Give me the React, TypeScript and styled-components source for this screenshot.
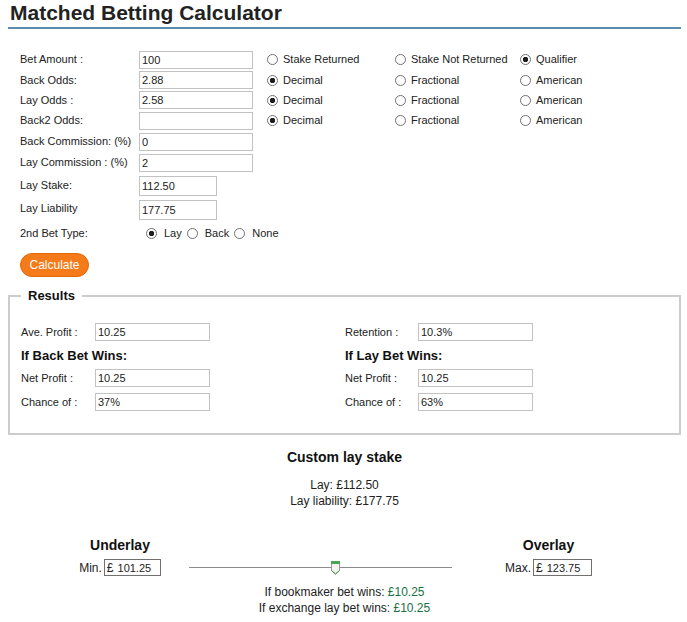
import React from "react";
import styled, { createGlobalStyle } from "styled-components";

const GlobalStyle = createGlobalStyle`
  body {
    margin: 0;
    background: #ffffff;
    font-family: "Liberation Sans", Arial, sans-serif;
    color: #222222;
  }
`;

const Page = styled.div`
  width: 673px;
  margin: 0 8px;
`;

const Title = styled.h1`
  margin: 0;
  padding: 0 0 2px 2px;
  font-size: 21px;
  line-height: 25px;
  font-weight: bold;
  color: #222222;
  border-bottom: 2px solid #5d89ab;
`;

const Form = styled.div`
  margin-top: 20px;
  padding-left: 12px;
`;

const Row = styled.div<{ $h: number }>`
  display: grid;
  grid-template-columns: 119px 128px 128px 125px auto;
  align-items: center;
  height: ${(p) => p.$h}px;
`;

const Label = styled.span<{ $top?: number }>`
  font-size: 11px;
  line-height: 13px;
  align-self: ${(p) => (p.$top !== undefined ? "start" : "center")};
  padding-top: ${(p) => p.$top ?? 0}px;
`;

const TextBox = styled.input<{ $w?: number; $h?: number }>`
  box-sizing: border-box;
  width: ${(p) => p.$w ?? 114}px;
  height: ${(p) => p.$h ?? 18}px;
  margin: 0;
  border: 1px solid #c2c2c2;
  padding: 0 2px;
  font: 11px "Liberation Sans", Arial, sans-serif;
  color: #222222;
  background: #ffffff;
  outline: none;
`;

const Choice = styled.label<{ $gap?: number }>`
  display: flex;
  align-items: center;
  gap: ${(p) => p.$gap ?? 5}px;
  font-size: 11px;
  line-height: 13px;
  white-space: nowrap;
`;

const Radio = styled.input.attrs({ type: "radio" })`
  appearance: none;
  margin: 0;
  width: 11px;
  height: 11px;
  border: 1px solid #707070;
  border-radius: 50%;
  background: #ffffff;
  flex: none;

  &:checked {
    background: radial-gradient(circle, #1e1e1e 0 2.4px, #ffffff 3px);
  }
`;

const BetTypes = styled.div`
  grid-column: 2 / span 4;
  display: flex;
  align-items: center;
  gap: 5px;
  padding-left: 7px;
`;

const CalcButton = styled.button`
  display: block;
  margin-top: 9px;
  width: 69px;
  height: 24px;
  padding: 0;
  border: 1px solid #e2690b;
  border-radius: 12px;
  background: #f47a1a;
  color: #ffffff;
  font: 12px "Liberation Sans", Arial, sans-serif;
`;

const Results = styled.fieldset`
  margin: 11px 0 0;
  padding: 16px 11px 19px;
  border: 2px solid #cccccc;
  min-width: 0;
`;

const Legend = styled.legend`
  padding: 0 7px;
  font-size: 13px;
  font-weight: bold;
  line-height: 16px;
  color: #111111;
`;

const ResultGrid = styled.div`
  display: grid;
  grid-template-columns: 324px 1fr;
  grid-template-rows: 24px 22px 24px 24px;
`;

const ResultRow = styled.div<{ $label: number }>`
  display: grid;
  grid-template-columns: ${(p) => p.$label}px 115px;
  align-items: center;
`;

const ResultHeading = styled.div`
  display: flex;
  align-items: center;
  font-size: 13px;
  font-weight: bold;
  color: #111111;
`;

const Custom = styled.div`
  margin-top: 14px;
  text-align: center;
  font-size: 12px;
  line-height: 16px;
`;

const Heading = styled.div`
  font-size: 14px;
  font-weight: bold;
  line-height: 17px;
  color: #111111;
`;

const Lines = styled.div<{ $mt: number }>`
  margin-top: ${(p) => p.$mt}px;
`;

const Money = styled.span`
  color: #20703f;
`;

const Adjust = styled.div`
  display: grid;
  grid-template-columns: 116px 263px 154px;
  column-gap: 11px;
  grid-template-rows: 17px 17px;
  row-gap: 5px;
  margin-top: 28px;
  padding-left: 54px;
  align-items: center;
`;

const SideHead = styled.div<{ $col: number; $indent?: number }>`
  grid-column: ${(p) => p.$col};
  grid-row: 1;
  padding-left: ${(p) => p.$indent ?? 0}px;
  text-align: center;
  font-size: 14px;
  font-weight: bold;
  line-height: 17px;
  color: #111111;
`;

const SideInput = styled.div<{ $col: number; $indent?: number }>`
  grid-column: ${(p) => p.$col};
  grid-row: 2;
  padding-left: ${(p) => p.$indent ?? 0}px;
  display: flex;
  justify-content: center;
  align-items: center;
  gap: 2px;
  font-size: 12px;
`;

const MoneyBox = styled.span<{ $w: number }>`
  box-sizing: border-box;
  display: inline-flex;
  align-items: center;
  gap: 4px;
  width: ${(p) => p.$w}px;
  height: 17px;
  padding-left: 2px;
  border: 1px solid #707070;
  font-size: 12px;
  & > b {
    font-weight: normal;
    font-size: 11px;
  }
`;

const Track = styled.div`
  grid-column: 2;
  grid-row: 2;
  position: relative;
  height: 17px;
  &::before {
    content: "";
    position: absolute;
    left: 0;
    right: 0;
    top: 8px;
    height: 1px;
    background: #8c8c8c;
  }
`;

const Thumb = styled.svg`
  position: absolute;
  left: 141px;
  top: 1px;
`;

const Outcome = styled.div`
  margin-top: 8px;
  text-align: center;
  font-size: 12px;
  line-height: 16px;
`;

const oddsRows = [
  { label: "Back Odds:", value: "2.88", name: "back" },
  { label: "Lay Odds :", value: "2.58", name: "lay" },
  { label: "Back2 Odds:", value: "", name: "back2" },
];

function App() {
  return (
    <Page>
      <GlobalStyle />
      <Title>Matched Betting Calculator</Title>
      <Form>
        <Row $h={21}>
          <Label>Bet Amount :</Label>
          <TextBox defaultValue="100" />
          <Choice>
            <Radio name="bettype" />
            Stake Returned
          </Choice>
          <Choice>
            <Radio name="bettype" />
            Stake Not Returned
          </Choice>
          <Choice>
            <Radio name="bettype" defaultChecked />
            Qualifier
          </Choice>
        </Row>
        {oddsRows.map((r, i) => (
          <Row key={r.name} $h={i === 2 ? 21 : 20}>
            <Label>{r.label}</Label>
            <TextBox defaultValue={r.value} />
            <Choice>
              <Radio name={r.name} defaultChecked />
              Decimal
            </Choice>
            <Choice>
              <Radio name={r.name} />
              Fractional
            </Choice>
            <Choice>
              <Radio name={r.name} />
              American
            </Choice>
          </Row>
        ))}
        <Row $h={21}>
          <Label>Back Commission: (%)</Label>
          <TextBox defaultValue="0" />
        </Row>
        <Row $h={21}>
          <Label>Lay Commission : (%)</Label>
          <TextBox defaultValue="2" />
        </Row>
        <Row $h={25}>
          <Label>Lay Stake:</Label>
          <TextBox $w={78} $h={20} defaultValue="112.50" />
        </Row>
        <Row $h={24}>
          <Label $top={4}>Lay Liability</Label>
          <TextBox $w={78} $h={20} defaultValue="177.75" />
        </Row>
        <Row $h={22}>
          <Label>2nd Bet Type:</Label>
          <BetTypes>
            <Choice $gap={7}>
              <Radio name="second" defaultChecked />
              Lay
            </Choice>
            <Choice $gap={7}>
              <Radio name="second" />
              Back
            </Choice>
            <Choice $gap={7}>
              <Radio name="second" />
              None
            </Choice>
          </BetTypes>
        </Row>
        <CalcButton>Calculate</CalcButton>
      </Form>

      <Results>
        <Legend>Results</Legend>
        <ResultGrid>
          <ResultRow $label={74}>
            <Label>Ave. Profit :</Label>
            <TextBox $w={115} defaultValue="10.25" />
          </ResultRow>
          <ResultRow $label={73}>
            <Label>Retention :</Label>
            <TextBox $w={115} defaultValue="10.3%" />
          </ResultRow>
          <ResultHeading>If Back Bet Wins:</ResultHeading>
          <ResultHeading>If Lay Bet Wins:</ResultHeading>
          <ResultRow $label={74}>
            <Label>Net Profit :</Label>
            <TextBox $w={115} defaultValue="10.25" />
          </ResultRow>
          <ResultRow $label={73}>
            <Label>Net Profit :</Label>
            <TextBox $w={115} defaultValue="10.25" />
          </ResultRow>
          <ResultRow $label={74}>
            <Label>Chance of :</Label>
            <TextBox $w={115} defaultValue="37%" />
          </ResultRow>
          <ResultRow $label={73}>
            <Label>Chance of :</Label>
            <TextBox $w={115} defaultValue="63%" />
          </ResultRow>
        </ResultGrid>
      </Results>

      <Custom>
        <Heading>Custom lay stake</Heading>
        <Lines $mt={11}>
          <div>Lay: £112.50</div>
          <div>Lay liability: £177.75</div>
        </Lines>
      </Custom>

      <Adjust>
        <SideHead $col={1}>Underlay</SideHead>
        <SideHead $col={3} $indent={17}>
          Overlay
        </SideHead>
        <SideInput $col={1}>
          Min.
          <MoneyBox $w={57}>
            £<b>101.25</b>
          </MoneyBox>
        </SideInput>
        <Track>
          <Thumb width="11" height="15" viewBox="0 0 11 15">
            <path
              d="M1.5 1.5 H9.5 V10.5 L5.5 14 L1.5 10.5 Z"
              fill="#f3f3f3"
              stroke="#9a9a9a"
            />
            <rect x="1" y="1" width="9" height="3" fill="#4aa552" />
            <path d="M1.5 10.5 L5.5 14 L9.5 10.5" fill="none" stroke="#3f9a48" />
          </Thumb>
        </Track>
        <SideInput $col={3} $indent={17}>
          Max.
          <MoneyBox $w={59}>
            £<b>123.75</b>
          </MoneyBox>
        </SideInput>
      </Adjust>

      <Outcome>
        <div>
          If bookmaker bet wins: <Money>£10.25</Money>
        </div>
        <div>
          If exchange lay bet wins: <Money>£10.25</Money>
        </div>
      </Outcome>
    </Page>
  );
}

export default App;
